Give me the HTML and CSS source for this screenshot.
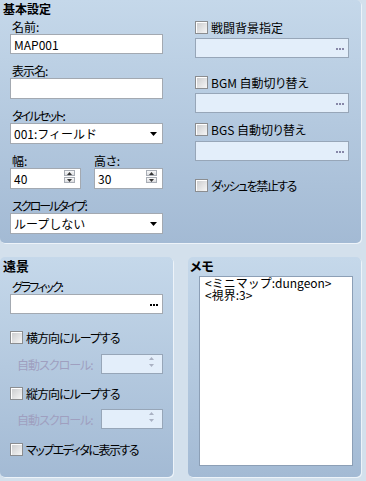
FILE: index.html
```html
<!DOCTYPE html>
<html lang="ja">
<head>
  <meta charset="UTF-8">
  <title>マップ設定</title>
  <link rel="stylesheet" href="styles.css">
</head>
<body>
  <div class="window">
    <!-- 基本設定 -->
    <section class="panel panel-basic">
      <div class="col col-left">
        <h2 class="panel-title">基本設定</h2>
        <div class="field field-name">
          <div class="field-label">名前:</div>
          <div class="textbox">MAP001</div>
        </div>
        <div class="field">
          <div class="field-label ls-1">表示名:</div>
          <div class="textbox"></div>
        </div>
        <div class="field">
          <div class="field-label ls-2">タイルセット:</div>
          <div class="textbox select">
            <span>001:フィールド</span>
            <svg class="drop-arrow" width="7" height="4" viewBox="0 0 7 4"><polygon points="0,0 7,0 3.5,4" fill="#000"/></svg>
          </div>
        </div>
        <div class="field-pair">
          <div class="field">
            <div class="field-label">幅:</div>
            <div class="textbox spin">
              <span>40</span>
              <div class="spin-buttons">
                <span class="spin-btn"><svg width="5" height="3" viewBox="0 0 5 3"><polygon points="0,3 5,3 2.5,0" fill="#333"/></svg></span>
                <span class="spin-btn"><svg width="5" height="3" viewBox="0 0 5 3"><polygon points="0,0 5,0 2.5,3" fill="#333"/></svg></span>
              </div>
            </div>
          </div>
          <div class="field">
            <div class="field-label">高さ:</div>
            <div class="textbox spin">
              <span>30</span>
              <div class="spin-buttons">
                <span class="spin-btn"><svg width="5" height="3" viewBox="0 0 5 3"><polygon points="0,3 5,3 2.5,0" fill="#333"/></svg></span>
                <span class="spin-btn"><svg width="5" height="3" viewBox="0 0 5 3"><polygon points="0,0 5,0 2.5,3" fill="#333"/></svg></span>
              </div>
            </div>
          </div>
        </div>
        <div class="field">
          <div class="field-label ls-2">スクロールタイプ:</div>
          <div class="textbox select">
            <span>ループしない</span>
            <svg class="drop-arrow" width="7" height="4" viewBox="0 0 7 4"><polygon points="0,0 7,0 3.5,4" fill="#000"/></svg>
          </div>
        </div>
      </div>

      <div class="col col-right">
        <div class="check check-battle"><span class="check-box"></span>戦闘背景指定</div>
        <div class="textbox is-disabled browse">
          <svg class="dots" width="8" height="2" viewBox="0 0 8 2"><rect x="0" y="0" width="2" height="2"/><rect x="3" y="0" width="2" height="2"/><rect x="6" y="0" width="2" height="2"/></svg>
        </div>
        <div class="check check-bgm"><span class="check-box"></span>BGM 自動切り替え</div>
        <div class="textbox is-disabled browse">
          <svg class="dots" width="8" height="2" viewBox="0 0 8 2"><rect x="0" y="0" width="2" height="2"/><rect x="3" y="0" width="2" height="2"/><rect x="6" y="0" width="2" height="2"/></svg>
        </div>
        <div class="check check-bgs"><span class="check-box"></span>BGS 自動切り替え</div>
        <div class="textbox is-disabled browse bgs-box">
          <svg class="dots" width="8" height="2" viewBox="0 0 8 2"><rect x="0" y="0" width="2" height="2"/><rect x="3" y="0" width="2" height="2"/><rect x="6" y="0" width="2" height="2"/></svg>
        </div>
        <div class="check check-dash ls-15"><span class="check-box"></span>ダッシュを禁止する</div>
      </div>
    </section>

    <div class="lower">
      <!-- 遠景 -->
      <section class="panel panel-parallax">
        <h2 class="panel-title">遠景</h2>
        <div class="field-label graphic-label ls-2">グラフィック:</div>
        <div class="textbox browse graphic-box">
          <svg class="dots dots-dark" width="8" height="2" viewBox="0 0 8 2"><rect x="0" y="0" width="2" height="2"/><rect x="3" y="0" width="2" height="2"/><rect x="6" y="0" width="2" height="2"/></svg>
        </div>
        <div class="check loop-h ls-1"><span class="check-box"></span>横方向にループする</div>
        <div class="auto-row auto-h">
          <span class="auto-label ls-1">自動スクロール:</span>
          <div class="textbox spin is-disabled auto-spin">
            <div class="spin-buttons">
              <span class="spin-btn flat"><svg width="5" height="3" viewBox="0 0 5 3"><polygon points="0,3 5,3 2.5,0" fill="#a9b1c2"/></svg></span>
              <span class="spin-btn flat"><svg width="5" height="3" viewBox="0 0 5 3"><polygon points="0,0 5,0 2.5,3" fill="#a9b1c2"/></svg></span>
            </div>
          </div>
        </div>
        <div class="check loop-v ls-1"><span class="check-box"></span>縦方向にループする</div>
        <div class="auto-row auto-v">
          <span class="auto-label ls-1">自動スクロール:</span>
          <div class="textbox spin is-disabled auto-spin">
            <div class="spin-buttons">
              <span class="spin-btn flat"><svg width="5" height="3" viewBox="0 0 5 3"><polygon points="0,3 5,3 2.5,0" fill="#a9b1c2"/></svg></span>
              <span class="spin-btn flat"><svg width="5" height="3" viewBox="0 0 5 3"><polygon points="0,0 5,0 2.5,3" fill="#a9b1c2"/></svg></span>
            </div>
          </div>
        </div>
        <div class="check show-editor ls-15"><span class="check-box"></span>マップエディタに表示する</div>
      </section>

      <!-- メモ -->
      <section class="panel panel-memo">
        <h2 class="panel-title">メモ</h2>
        <textarea class="memo" readonly>&lt;ミニマップ:dungeon&gt;
&lt;視界:3&gt;</textarea>
      </section>
    </div>
  </div>
</body>
</html>
```

FILE: styles.css
```css
html, body {
  margin: 0;
  padding: 0;
  width: 366px;
  height: 481px;
  overflow: hidden;
  background: #d3e0ec;
  font-family: "Noto Sans CJK JP", sans-serif;
  font-size: 12px;
  color: #000;
}

.window {
  width: 366px;
}

/* パネル共通 */
.panel {
  box-sizing: border-box;
  background: linear-gradient(to bottom, #c5d8ea, #a3bad4);
  border-radius: 5px;
  box-shadow: 1px 1px 0 #edf3f9;
}

.panel-title {
  margin: 0;
  font-size: 13px;
  font-weight: bold;
  line-height: 15px;
  font-feature-settings: "palt";
}

/* 字間調整 */
.ls-1 { letter-spacing: -1px; }
.ls-15 { letter-spacing: -1.5px; }
.ls-2 { letter-spacing: -2px; }

/* 基本設定 */
.panel-basic {
  width: 361px;
  height: 243px;
  border-radius: 0 5px 5px 5px;
  display: flex;
  gap: 32px;
  padding: 1px 0 0 10px;
}

.col-left {
  width: 153px;
}

.col-left .panel-title {
  font-size: 12px;
  line-height: 16px;
  margin-left: -7px;
}

.col-right {
  width: 154px;
  padding-top: 20px;
}

.field {
  margin-bottom: 8px;
}

.field-label {
  line-height: 14px;
  padding: 2px 0 0 2px;
  font-feature-settings: "palt";
}

.field-name .field-label {
  padding-top: 3px;
}

.field-name .textbox {
  height: 20px;
}

.field-pair {
  display: grid;
  grid-template-columns: 71px 69px;
  gap: 13px;
}

.field-pair .field:last-child .field-label {
  padding-left: 0;
}

/* 入力欄 */
.textbox {
  box-sizing: border-box;
  height: 21px;
  background: #fff;
  border: 1px solid #a3a9b1;
  padding: 0 3px;
  display: flex;
  align-items: center;
  line-height: 19px;
}

.textbox.is-disabled {
  background: #e3eefa;
  border-color: #97a6b8;
}

.select {
  justify-content: space-between;
  padding-right: 5px;
}

.spin {
  justify-content: space-between;
  padding-right: 5px;
}

.spin-buttons {
  display: flex;
  flex-direction: column;
  gap: 1px;
  margin-top: -4px;
}

.spin-btn {
  box-sizing: border-box;
  width: 11px;
  height: 6px;
  border: 1px solid #a8adb5;
  background: linear-gradient(to bottom, #fafafa, #dcdde0);
  display: flex;
  align-items: center;
  justify-content: center;
}

.spin-btn svg {
  display: block;
}

.spin-btn.flat {
  border-color: transparent;
  background: transparent;
}

.browse {
  justify-content: flex-end;
  padding-right: 4px;
}

.dots {
  display: block;
  fill: #8787a8;
  margin-top: 2px;
}

.dots-dark {
  fill: #000;
}

/* チェックボックス */
.check {
  display: flex;
  align-items: center;
  gap: 3px;
  height: 13px;
  line-height: 13px;
  font-feature-settings: "palt";
}

.check-box {
  box-sizing: border-box;
  width: 13px;
  height: 13px;
  flex: none;
  border: 1px solid #8b8d90;
  background: linear-gradient(135deg, #c9cacc, #f6f6f6);
  box-shadow: inset 1px 1px 0 #fff;
}

.col-right .textbox {
  height: 20px;
  margin-top: 4px;
}

.check-bgm {
  margin-top: 18px;
}

.check-bgs {
  margin-top: 10px;
}

.col-right .bgs-box {
  margin-top: 5px;
}

.check-dash {
  margin-top: 18px;
}

/* 下段 */
.lower {
  display: flex;
  gap: 15px;
  margin-top: 14px;
}

.panel-parallax {
  width: 173px;
  height: 220px;
  padding: 1px 10px 0 10px;
}

.panel-parallax .panel-title {
  margin-left: -7px;
}

.graphic-label {
  margin-top: 5px;
}

.graphic-box {
  height: 20px;
}

.loop-h {
  margin-top: 17px;
}

.auto-row {
  display: flex;
  align-items: center;
  justify-content: space-between;
  padding-left: 7px;
}

.auto-h {
  margin-top: 10px;
}

.auto-v {
  margin-top: 9px;
}

.auto-label {
  color: #9f9fbf;
  font-feature-settings: "palt";
}

.auto-spin {
  width: 62px;
  height: 20px;
  justify-content: flex-end;
}

.loop-v {
  margin-top: 13px;
}

.show-editor {
  margin-top: 14px;
}

.panel-memo {
  width: 173px;
  height: 220px;
  padding: 1px 8px 0 11px;
}

.panel-memo .panel-title {
  margin-left: -9px;
}

.memo {
  display: block;
  box-sizing: border-box;
  width: 154px;
  height: 190px;
  margin: 3px 0 0 0;
  padding: 0 5px;
  border: 1px solid #8c9fb6;
  background: #fff;
  resize: none;
  overflow: hidden;
  font-family: "Noto Sans CJK JP", sans-serif;
  font-size: 12px;
  line-height: 12px;
  color: #000;
  outline: none;
}
```
